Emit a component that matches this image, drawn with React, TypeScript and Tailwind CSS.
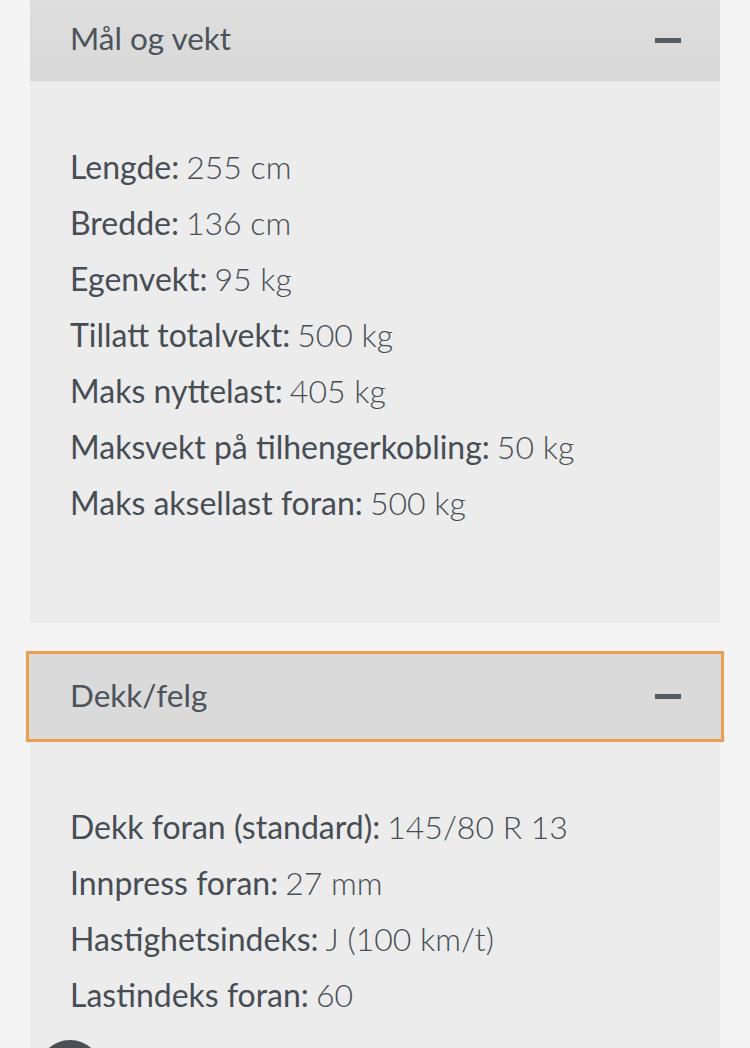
import React from "react";

const sections = [
  {
    title: "Mål og vekt",
    focused: false,
    items: [
      ["Lengde:", "255 cm"],
      ["Bredde:", "136 cm"],
      ["Egenvekt:", "95 kg"],
      ["Tillatt totalvekt:", "500 kg"],
      ["Maks nyttelast:", "405 kg"],
      ["Maksvekt på tilhengerkobling:", "50 kg"],
      ["Maks aksellast foran:", "500 kg"],
    ],
  },
  {
    title: "Dekk/felg",
    focused: true,
    items: [
      ["Dekk foran (standard):", "145/80 R 13"],
      ["Innpress foran:", "27 mm"],
      ["Hastighetsindeks:", "J (100 km/t)"],
      ["Lastindeks foran:", "60"],
    ],
  },
];

export default function App() {
  return (
    <div
      className="relative w-[750px] h-[1048px] overflow-hidden bg-[#f4f4f4] px-[30px]"
      style={{ fontFamily: "Lato, 'Open Sans', sans-serif" }}
    >
      {/* first section */}
      <div className="flex flex-col">
        <div className="h-[82px] flex items-center justify-between pl-[40px] pr-[39px] bg-gradient-to-b from-[#dedede] to-[#d9d9d9] border-b border-[#e4e4e4]">
          <span className="text-[31.5px] text-[#4d535a] leading-none -mt-[4px]">Mål og vekt</span>
          <span className="block w-[26px] h-[5px] bg-[#555b62]" />
        </div>
        <div className="bg-[#ececec] pt-[57px] pb-[92px] pl-[40px]">
          {sections[0].items.map(([k, v]) => (
            <div key={k} className="h-[56px] flex items-center text-[32px] text-[#474d54] leading-none">
              <span className="font-normal">{k}</span>
              <span className="font-light ml-[7px]">{v}</span>
            </div>
          ))}
        </div>
      </div>

      {/* second section */}
      <div className="mt-[28px] flex flex-col">
        <div className="-mx-[4px] h-[91px] flex items-center justify-between pl-[41px] pr-[40px] bg-[#dadada] border-[3px] border-[#eb9e4f]">
          <span className="text-[31.5px] text-[#4d535a] leading-none -mt-[2px]">Dekk/felg</span>
          <span className="block w-[26px] h-[5px] bg-[#555b62]" />
        </div>
        <div className="bg-[#ececec] pt-[57px] pb-[40px] pl-[40px]">
          {sections[1].items.map(([k, v]) => (
            <div key={k} className="h-[56px] flex items-center text-[32px] text-[#474d54] leading-none">
              <span className="font-normal">{k}</span>
              <span className="font-light ml-[7px]">{v}</span>
            </div>
          ))}
        </div>
      </div>

      <div className="absolute left-[38px] top-[1040px] w-[64px] h-[64px] rounded-full bg-[#4a4f55]" />
    </div>
  );
}
